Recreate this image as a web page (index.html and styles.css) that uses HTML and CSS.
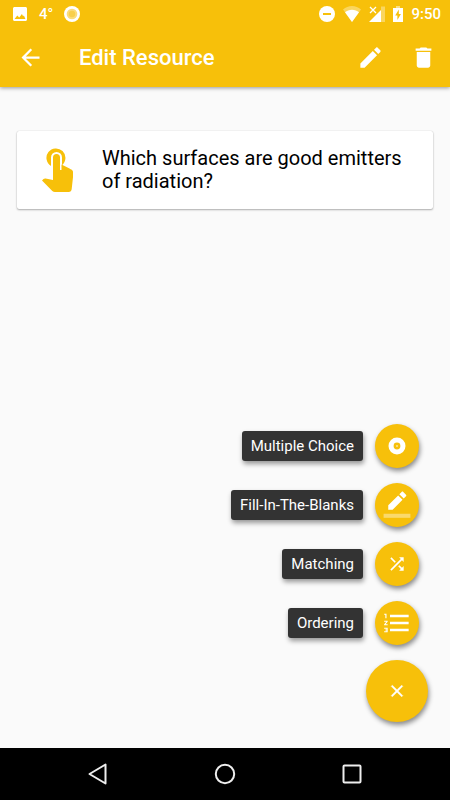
FILE: index.html
```html
<!DOCTYPE html>
<html lang="en">
<head>
    <meta charset="UTF-8">
    <meta name="viewport" content="width=device-width, initial-scale=1.0">
    <title>Edit Resource</title>
    <link rel="stylesheet" href="styles.css">
</head>
<body>
<header class="header">
    <div class="status">
        <svg width="14" height="14" viewBox="3 3 18 18"><path d="M21 19V5c0-1.100-.9-2-2-2H5c-1.100 0-2 .9-2 2v14c0 1.100.9 2 2 2h14c1.100 0 2-.9 2-2zM5 18.500l3.500-4.500 2.500 2.500 3.500-4.500 1.500 3 1-1 2 4.500z"/></svg>
        <span class="status-temp">4°</span>
        <svg width="16" height="16" viewBox="0 0 16 16"><circle cx="8" cy="8" r="8"/><circle cx="8" cy="8" r="5.300" fill="#fbdc7b"/><circle cx="8" cy="8" r="3.200" fill="#f8cf4c"/></svg>
        <div class="status-right">
            <svg width="16" height="16" viewBox="0 0 16 16"><circle cx="8" cy="8" r="8"/><path d="M4 7h8v2H4z" fill="#f7c00a"/></svg>
            <svg width="18" height="16" viewBox="0 0 18 16"><path d="M9 16L0 3.600C2.500 1.300 5.600 0 9 0s6.500 1.300 9 3.600z" opacity=".35"/><path d="M9 16L2 6.300C3.900 4.700 6.300 3.800 9 3.800s5.100.9 7 2.500z"/></svg>
            <svg width="16" height="16" viewBox="0 0 16 16"><path d="M12 0.500h4v15.500h-4z" opacity=".35"/><path d="M0 16L12 4v12z"/><path d="M1 1l6 6M7 1L1 7" stroke="#fff" stroke-width="1.300"/></svg>
            <svg width="10" height="16" viewBox="0 0 10 16"><path d="M3 0h4v2H3z" opacity=".5"/><path d="M0 2h10v14H0z"/><path d="M5.800 3.500L2.200 9.500h2.200v4.500L7.900 8H5.800z" fill="#f7c00a"/></svg>
            <span>9:50</span>
        </div>
    </div>
    <div class="toolbar">
        <button class="icon-button" type="button" aria-label="Back">
            <svg width="27" height="27" viewBox="0 0 24 24"><path d="M20 11H7.830l5.590-5.590L12 4l-8 8 8 8 1.410-1.410L7.830 13H20v-2z"/></svg>
        </button>
        <h1 class="title">Edit Resource</h1>
        <button class="icon-button" type="button" aria-label="Edit">
            <svg width="27" height="27" viewBox="0 0 24 24"><path d="M3 17.250V21h3.750L17.810 9.940l-3.750-3.750L3 17.250zM20.710 7.040c.39-.39.39-1.020 0-1.410l-2.340-2.340c-.39-.39-1.020-.39-1.410 0l-1.830 1.830 3.750 3.750 1.830-1.830z"/></svg>
        </button>
        <button class="icon-button" type="button" aria-label="Delete">
            <svg width="27" height="27" viewBox="0 0 24 24"><path d="M6 19c0 1.100.9 2 2 2h8c1.100 0 2-.9 2-2V7H6v12zM19 4h-3.500l-1-1h-5l-1 1H5v2h14V4z"/></svg>
        </button>
    </div>
</header>

<main class="content">
    <article class="card">
        <svg class="card-icon" width="32" height="44" viewBox="0 0 32 44">
            <path d="M9 18A9.500 9.500 0 1 1 20 17.200V9.500a5.500 5.500 0 0 0-11 0z"/>
            <path d="M11 9.500a3.500 3.500 0 0 1 7 0V22h1.500v-5.500l8 4c1.500.8 3.500 1.700 3.500 3.300v5.500L29.700 41c-.2 1.700-1.200 3-3 3H13c-1 0-2-.4-2.700-1.100L0 32.500l1.500-1.400c.6-.6 1.300-.7 2.100-.6L11 32z"/>
        </svg>
        <p class="question">Which surfaces are good emitters of radiation?</p>
    </article>

    <!-- Speed dial -->
    <div class="dial">
        <div class="dial-item">
            <label class="dial-label" for="multiple">Multiple Choice</label>
            <button class="fab fab-mini" type="button" id="multiple">
                <svg width="18" height="18" viewBox="0 0 18 18"><path fill-rule="evenodd" d="M9 .5a8.500 8.500 0 1 0 0 17a8.500 8.500 0 1 0 0-17zM9 5.600a3.400 3.400 0 1 1 0 6.800a3.400 3.400 0 1 1 0-6.800z"/><circle cx="9" cy="9" r=".8"/></svg>
            </button>
        </div>
        <div class="dial-item">
            <label class="dial-label" for="blanks">Fill-In-The-Blanks</label>
            <button class="fab fab-mini" type="button" id="blanks">
                <svg width="28" height="28" viewBox="0 0 24 24"><path d="M16.750 7.500L13 3.750l-8.500 8.500V16h3.750l8.500-8.500zM19.710 4.540c.39-.39.39-1.020 0-1.410L17.370.79c-.39-.39-1.020-.39-1.410 0L14 2.750 17.750 6.500l1.960-1.960z"/><path d="M.5 19.500h23V23H.5z" opacity=".4"/></svg>
            </button>
        </div>
        <div class="dial-item">
            <label class="dial-label" for="matching">Matching</label>
            <button class="fab fab-mini" type="button" id="matching">
                <svg width="20" height="20" viewBox="0 0 24 24"><path d="M10.590 9.170L5.410 4 4 5.410l5.170 5.170 1.420-1.410zM14.500 4l2.040 2.040L4 18.590 5.410 20 17.960 7.460 20 9.500V4h-5.500zm.33 9.410l-1.410 1.410 3.130 3.130L14.500 20H20v-5.500l-2.040 2.040-3.130-3.130z"/></svg>
            </button>
        </div>
        <div class="dial-item">
            <label class="dial-label" for="ordering">Ordering</label>
            <button class="fab fab-mini" type="button" id="ordering">
                <svg width="28" height="28" viewBox="0 0 24 24"><path d="M1 17h2v.5H2v1h1v.5H1v1h3v-4H1v1zm1-9h1V4H1v1h1v3zm-1 3h1.800L1 13.100v.9h3v-1H2.200L4 10.900V10H1v1zm5-6v2h16V5H6zm0 14h16v-2H6v2zm0-6h16v-2H6v2z"/></svg>
            </button>
        </div>
        <button class="fab fab-main" type="button" aria-label="Close menu">
            <svg width="20" height="20" viewBox="0 0 24 24"><path d="M19 6.410L17.590 5 12 10.590 6.410 5 5 6.410 10.590 12 5 17.590 6.410 19 12 13.410 17.590 19 19 17.590 13.410 12z" stroke="#fff" stroke-width=".5"/></svg>
        </button>
    </div>
</main>

<nav class="navbar">
    <button class="nav-button" type="button" aria-label="System back">
        <svg width="22" height="22" viewBox="0 0 22 22"><path d="M18.500 1.500v19L2.500 11z"/></svg>
    </button>
    <button class="nav-button" type="button" aria-label="Home">
        <svg width="22" height="22" viewBox="0 0 22 22"><circle cx="11" cy="11" r="9.200"/></svg>
    </button>
    <button class="nav-button" type="button" aria-label="Recent apps">
        <svg width="22" height="22" viewBox="0 0 22 22"><rect x="2.500" y="2.500" width="17" height="17" rx="1"/></svg>
    </button>
</nav>
</body>
</html>
```

FILE: styles.css
```css
* {
    box-sizing: border-box;
}
body {
    display: flex;
    flex-direction: column;
    min-height: 100vh;
    margin: 0;
    font-family: Roboto, sans-serif;
    background-color: #fafafa;
}
button {
    display: flex;
    align-items: center;
    justify-content: center;
    padding: 0;
    border: 0;
    background: none;
    cursor: pointer;
}
svg {
    display: block;
    flex: none;
    fill: #fff;
}
.header {
    color: #fff;
    background-color: #f7c00a;
    box-shadow: 0 1px 4px rgba(0, 0, 0, 0.4);
}
.status {
    display: flex;
    align-items: center;
    height: 27px;
    padding: 0 9px 0 13px;
    font-size: 15px;
    font-weight: 500;
}
.status-temp {
    margin: 0 11px 0 12px;
}
.status-right {
    display: flex;
    align-items: center;
    gap: 8px;
    margin-left: auto;
}
.toolbar {
    display: flex;
    align-items: center;
    gap: 26px;
    height: 60px;
    padding: 0 13px 0 17px;
}
.title {
    flex: 1;
    margin: 0;
    padding-left: 9px;
    font-size: 22px;
    font-weight: 500;
}
.content {
    display: flex;
    flex: 1;
    flex-direction: column;
    padding: 44px 17px 26px;
}
.card {
    display: flex;
    align-items: center;
    gap: 28px;
    padding: 16px 25px;
    background-color: #fff;
    border-radius: 2px;
    box-shadow: 0 1px 2px rgba(0, 0, 0, 0.3), 0 0 1px rgba(0, 0, 0, 0.2);
}
.card-icon {
    fill: #f7c00a;
}
.question {
    margin: 0;
    font-size: 20px;
    line-height: 23px;
    color: #000;
}
.dial {
    display: flex;
    flex-direction: column;
    align-items: flex-end;
    gap: 15px;
    margin-top: auto;
    padding-right: 5px;
}
.dial-item {
    display: flex;
    align-items: center;
    gap: 12px;
    padding-right: 9px;
}
.dial-label {
    padding: 0 9px;
    font-size: 15px;
    line-height: 30px;
    color: #fff;
    background-color: #333;
    border-radius: 3px;
    box-shadow: 1px 3px 5px rgba(0, 0, 0, 0.4);
}
.fab {
    border-radius: 50%;
    background-color: #f7c00a;
    box-shadow: 1px 3px 5px rgba(0, 0, 0, 0.45);
}
.fab-mini {
    width: 44px;
    height: 44px;
}
.fab-main {
    width: 62px;
    height: 62px;
}
.navbar {
    display: flex;
    height: 52px;
    padding: 0 35px;
    background-color: #000;
}
.nav-button {
    flex: 1;
}
.nav-button svg {
    fill: none;
    stroke: #eee;
    stroke-width: 2;
    stroke-linejoin: round;
}
```
